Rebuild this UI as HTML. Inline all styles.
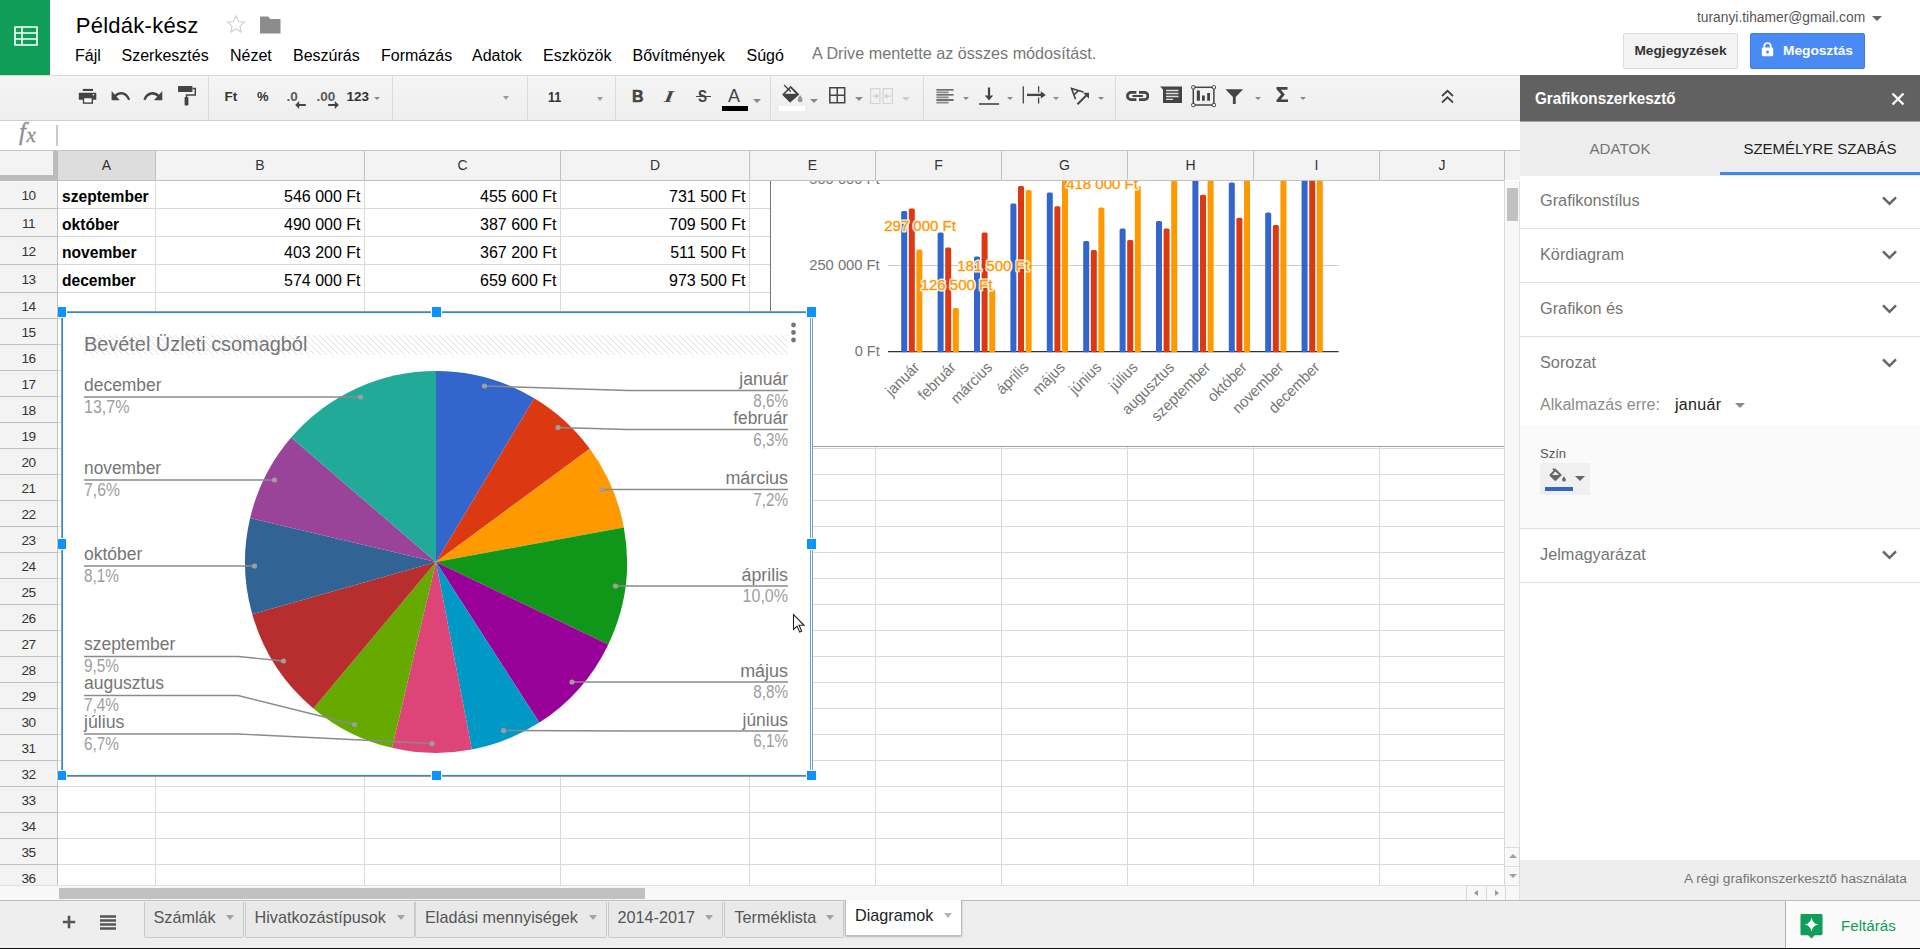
<!DOCTYPE html>
<html><head><meta charset="utf-8">
<style>
*{box-sizing:border-box;margin:0;padding:0}
html,body{width:1920px;height:949px;overflow:hidden;background:#fff;font-family:"Liberation Sans",sans-serif;}
div,span,svg{position:absolute}
.t{white-space:nowrap}
#top{left:0;top:0;width:1920px;height:75px;background:#fff}
#logo{left:0;top:0;width:50px;height:75px;background:#0f9d58}
#title{left:75.7px;top:12.7px;font-size:22px;line-height:26px;color:#000;letter-spacing:0.27px}
.menu{top:46px;font-size:16px;line-height:20px;color:#000}
#saved{left:812px;top:43px;font-size:16.2px;line-height:20px;color:#777}
#email{left:1697px;top:9px;font-size:13.8px;line-height:18px;color:#555}
.btn{top:33px;height:36px;border-radius:2px;font-weight:bold;font-size:13.7px;line-height:33px}
#toolbar{left:0;top:75px;width:1520px;height:46px;background:linear-gradient(#f5f5f5,#eeeeee);border-top:1px solid #d9d9d9;border-bottom:1px solid #d0d0d0}
.sep{top:76px;width:1px;height:44px;background:#dadada}
.tb{font-weight:bold;color:#333;font-size:13px;line-height:16px}
.dd{width:0;height:0;border-left:4px solid transparent;border-right:4px solid transparent;border-top:4px solid #777}
#fbar{left:0;top:121px;width:1520px;height:30px;background:#fff}
#grid{left:0;top:150px;width:1520px;height:750px;background:#fff;overflow:hidden}
.ch{top:1px;height:29px;background:#f3f3f3;border-right:1px solid #c0c0c0;color:#333;font-size:14px;line-height:28px;text-align:center}
.rh{left:0;width:57px;background:#f3f3f3;border-bottom:1px solid #c0c0c0;color:#333;font-size:13.6px;letter-spacing:-0.6px;text-align:center}
.vl{width:1px;background:#d9d9d9;top:30px;height:705px}
.hl{height:1px;background:#d9d9d9;left:58px;width:1446px}
.cell{font-size:15.6px;line-height:28px;height:28px;color:#000}
.cb{font-weight:bold;left:62px}
.cn{text-align:right;font-size:16px}
#panel{left:1520px;top:75px;width:400px;height:825px;background:#fff}
.sec{left:20px;font-size:16.3px;line-height:20px;color:#757575}
.sl{left:0;width:400px;height:1px;background:#e0e0e0}
#bottom{left:0;top:900px;width:1920px;height:48px;background:#eeeeee;border-top:1px solid #bdbdbd}
.tab{top:1px;height:36px;background:#e9e9e9;border:1px solid #c9c9c9;border-top:none;border-radius:0 0 2px 2px;font-size:16.2px;line-height:31px;color:#555}
.tab .dd{top:12.5px;border-top-color:#a3a3a3;border-left-width:4.75px;border-right-width:4.75px;border-top-width:5px}
</style></head><body>
<div id="top">
<div id="logo"><svg style="left:13.5px;top:26px" width="24" height="20" viewBox="0 0 24 20"><path d="M1 1h22v18H1zM1 7h22M1 13h22M8 1v18" fill="none" stroke="#fff" stroke-width="1.6"/></svg></div>
<div id="title" class="t">Példák-kész</div>
<svg style="left:225px;top:13px" width="22" height="22" viewBox="0 0 24 24"><path d="M12 3.2l2.7 6.1 6.6.6-5 4.4 1.5 6.5L12 17.4l-5.8 3.4 1.5-6.5-5-4.4 6.6-.6z" fill="none" stroke="#cfcfcf" stroke-width="1.2" stroke-linejoin="miter"/></svg>
<svg style="left:260px;top:16px" width="21" height="18" viewBox="0 0 21 18"><path d="M0 1.5Q0 0.5 1 0.5H8L10.5 3H20Q20.5 3 20.5 4V17.5H0z" fill="#8c8c8c"/></svg>
<div class="menu t" style="left:75px">Fájl</div>
<div class="menu t" style="left:121.5px">Szerkesztés</div>
<div class="menu t" style="left:230px">Nézet</div>
<div class="menu t" style="left:293px">Beszúrás</div>
<div class="menu t" style="left:381px">Formázás</div>
<div class="menu t" style="left:472px">Adatok</div>
<div class="menu t" style="left:543px">Eszközök</div>
<div class="menu t" style="left:632.5px">Bővítmények</div>
<div class="menu t" style="left:746.5px">Súgó</div>
<div id="saved" class="t">A Drive mentette az összes módosítást.</div>
<div id="email" class="t">turanyi.tihamer@gmail.com</div>
<div class="dd" style="left:1872px;top:16px;border-left-width:5px;border-right-width:5px;border-top-width:5px;border-top-color:#666"></div>
<div class="btn t" style="left:1623px;width:115px;background:#f3f3f3;border:1px solid #dcdcdc;color:#333;text-align:center">Megjegyzések</div>
<div class="btn t" style="left:1750px;width:115px;background:#4a8af4;border:1px solid #3f7de8;color:#fff;"><span class="t" style="left:32px;top:0">Megosztás</span><svg style="left:10px;top:7.5px" width="13" height="15" viewBox="0 0 13 15"><path d="M3.3 6V4.2a3.2 3.2 0 0 1 6.4 0V6" fill="none" stroke="#fff" stroke-width="1.7"/><rect x="0.8" y="5.6" width="11.4" height="8.6" rx="1.2" fill="#fff"/><circle cx="6.5" cy="9.9" r="1.5" fill="#4a8af4"/></svg></div>
</div>
<div id="toolbar"></div>
<div class="sep" style="left:208px"></div>
<div class="sep" style="left:392px"></div>
<div class="sep" style="left:527px"></div>
<div class="sep" style="left:615px"></div>
<div class="sep" style="left:770px"></div>
<div class="sep" style="left:923px"></div>
<div class="sep" style="left:1115px"></div>
<svg style="left:78px;top:88px" width="19" height="17" viewBox="0 0 19 17"><rect x="4.8" y="0.9" width="10.2" height="2.1" fill="#444"/><rect x="0.8" y="4.8" width="17.5" height="7" rx="0.6" fill="#444"/><rect x="5.5" y="9.6" width="8.8" height="5.5" fill="#fff" stroke="#444" stroke-width="1.4"/><circle cx="15.4" cy="6.7" r="0.8" fill="#fff"/></svg>
<svg style="left:109px;top:84px" width="24" height="20" viewBox="0 0 24 20"><path transform="translate(2.6 7) scale(0.906 1.03) translate(-2 -7)" d="M12.5 8c-2.65 0-5.05.99-6.9 2.6L2 7v9h9l-3.620-3.620c1.390-1.160 3.160-1.880 5.120-1.880 3.540 0 6.550 2.310 7.600 5.500l2.370-.780C21.080 11.030 17.150 8 12.500 8z" fill="#444"/></svg>
<svg style="left:141px;top:84px" width="24" height="20" viewBox="0 0 24 20"><path transform="translate(2.4 7) scale(0.924 1.04) translate(-1.54 -7)" d="M18.400 10.600C16.550 8.990 14.150 8 11.500 8c-4.650 0-8.580 3.030-9.960 7.220L3.900 16c1.050-3.190 4.050-5.500 7.600-5.500 1.950 0 3.730.720 5.120 1.880L13 16h9V7l-3.600 3.600z" fill="#444"/></svg>
<svg style="left:177px;top:85px" width="20" height="22" viewBox="0 0 20 22"><rect x="1" y="1" width="14.5" height="6" rx="0.8" fill="#444"/><path d="M15.5 3.5h2.8v6.5H9.5v3" fill="none" stroke="#444" stroke-width="1.5"/><rect x="7.6" y="12" width="3.8" height="8.5" rx="0.8" fill="#444"/></svg>
<div class="tb t" style="left:224.5px;top:88.7px;font-size:13.5px">Ft</div>
<div class="tb t" style="left:257px;top:88.7px;font-size:13px">%</div>
<div class="tb t" style="left:286.5px;top:89px;font-size:13.5px;color:#5a5a5a">.0</div>
<svg style="left:294.5px;top:101px" width="11" height="8" viewBox="0 0 11 8"><path d="M4.2 0L0.2 4 4.2 8z" fill="#444"/><path d="M3 3h7.8v2H3z" fill="#444"/></svg>
<div class="tb t" style="left:316.5px;top:89px;font-size:13.5px;color:#5a5a5a">.00</div>
<svg style="left:328px;top:101px" width="11" height="8" viewBox="0 0 11 8"><path d="M6.8 0L10.8 4 6.8 8z" fill="#444"/><path d="M8 3H0.2v2H8z" fill="#444"/></svg>
<div class="tb t" style="left:346.5px;top:88.7px;font-size:13.5px">123</div>
<div class="dd" style="left:373.5px;top:97px;border-left-width:3.5px;border-right-width:3.5px;border-top-width:3.5px;border-top-color:#888"></div>
<div class="dd" style="left:503.3px;top:96px;border-left-width:3.3px;border-right-width:3.3px;border-top-width:4px;border-top-color:#999"></div>
<div class="tb t" style="left:546.5px;top:89px;font-size:14.6px;font-weight:bold;transform:scaleX(0.86)">11</div>
<div class="dd" style="left:597.3px;top:97px;border-left-width:3.3px;border-right-width:3.3px;border-top-width:4px;border-top-color:#999"></div>
<div class="tb t" style="left:632px;top:86.5px;font-size:16px;line-height:20px;font-weight:bold;color:#444;-webkit-text-stroke:0.5px #444">B</div>
<div class="tb t" style="left:666px;top:86.5px;font-size:16.5px;line-height:20px;font-weight:bold;font-family:'Liberation Serif',serif;color:#444;transform:skewX(-22deg) scaleX(1.35);transform-origin:50% 50%">I</div>
<div class="tb t" style="left:697px;top:86px;font-size:16.5px;line-height:20px;font-weight:bold;color:#444;transform:scaleX(0.82)">S</div><div style="left:695.5px;top:95.5px;width:15px;height:1.5px;background:#444"></div>
<div class="tb t" style="left:728px;top:85px;font-size:18px;line-height:22px;font-weight:normal;color:#444">A</div><div style="left:722px;top:106px;width:26px;height:5px;background:#000"></div>
<div class="dd" style="left:753px;top:99px;border-left-width:4px;border-right-width:4px;border-top-width:4px;border-top-color:#888"></div>
<svg style="left:779px;top:84px" width="26" height="20" viewBox="0 0 26 20"><path d="M3.900 10.700L11.700 2.600 19.600 10.400 11.100 17.900z" fill="#444" stroke="#444" stroke-width="1.200" stroke-linejoin="round"/><path d="M6.000 9.800L11.600 4.300 16.800 9.800z" fill="#f7f7f7"/><path d="M5.100 1L11.800 7.800" stroke="#444" stroke-width="1.400" fill="none"/><path d="M21.100 11q2.500 3.300 2.500 4.800a2.500 2.500 0 0 1-5 0q0-1.500 2.500-4.800z" fill="#9a9a9a"/></svg>
<div style="left:779px;top:106px;width:26px;height:5px;background:#fff"></div>
<div class="dd" style="left:810px;top:99px;border-left-width:4px;border-right-width:4px;border-top-width:4px;border-top-color:#888"></div>
<svg style="left:829px;top:87.3px" width="16.5" height="16.5" viewBox="0 0 16.5 16.5"><path d="M0.8 0.8h14.900v14.900H0.800zM8.250 0.800v14.900M0.800 8.250h14.900" fill="none" stroke="#444" stroke-width="1.500"/></svg>
<div class="dd" style="left:855px;top:97px;border-left-width:4px;border-right-width:4px;border-top-width:4px;border-top-color:#888"></div>
<svg style="left:870px;top:87.6px" width="23" height="16.2" viewBox="0 0 23 16.2"><path d="M0.600 0.600h9.300v15H0.600zM13.100 0.600h9.300v15h-9.300z" fill="none" stroke="#d4d4d4" stroke-width="1.200"/><path d="M2.800 8.100h4M17 8.100h4" fill="none" stroke="#d0d0d0" stroke-width="1.300"/><path d="M5.800 5.300L9 8.100 5.800 10.900zM17.200 5.300L14 8.100l3.200 2.800z" fill="#d0d0d0"/></svg>
<div class="dd" style="left:902px;top:97px;border-left-width:4px;border-right-width:4px;border-top-width:4px;border-top-color:#ccc"></div>
<svg style="left:935.5px;top:88.5px" width="18" height="15" viewBox="0 0 18 15"><path d="M0.400 0.900h17.200M0.400 5.900h17.200M0.400 11h17.200" stroke="#444" stroke-width="1.300"/><path d="M0.400 3.400h12.200M0.400 8.400h12.200M0.400 13.600h12.200" stroke="#8a8a8a" stroke-width="1.700"/></svg>
<div class="dd" style="left:962.5px;top:97px;border-left-width:3.5px;border-right-width:3.5px;border-top-width:3.5px;border-top-color:#888"></div>
<svg style="left:979px;top:87px" width="20" height="18" viewBox="0 0 20 18"><path d="M10 0.500v10" stroke="#444" stroke-width="2.200"/><path d="M5.800 8.500h8.400L10 13.500z" fill="#444"/><path d="M0 17h20" stroke="#444" stroke-width="1.600"/></svg>
<div class="dd" style="left:1007px;top:97px;border-left-width:3.5px;border-right-width:3.5px;border-top-width:3.5px;border-top-color:#888"></div>
<svg style="left:1022px;top:86px" width="24" height="20" viewBox="0 0 24 20"><path d="M1.300 0.200v17.400" stroke="#444" stroke-width="1.300"/><path d="M16.600 0.200v6.300M16.600 11.400v6.200" stroke="#444" stroke-width="1.300"/><path d="M5 8.900h15" stroke="#444" stroke-width="2.300"/><path d="M18.800 5.300L23.800 8.900l-5 3.600z" fill="#444"/></svg>
<div class="dd" style="left:1053px;top:97px;border-left-width:3.5px;border-right-width:3.5px;border-top-width:3.5px;border-top-color:#888"></div>
<svg style="left:1069px;top:86px" width="22" height="20" viewBox="0 0 22 20"><path d="M6.500 13.300L2.500 2.400 14.400 5.900M4.900 8.900L9.600 4.500" fill="none" stroke="#444" stroke-width="1.600" stroke-linejoin="miter"/><path d="M8.500 18.300L18.500 8.300" stroke="#444" stroke-width="2"/><path d="M14 6.700h6v6z" fill="#444"/></svg>
<div class="dd" style="left:1098px;top:97px;border-left-width:3.5px;border-right-width:3.5px;border-top-width:3.5px;border-top-color:#888"></div>
<svg style="left:1126px;top:91.1px" width="23.4" height="10" viewBox="0 0 23.4 10"><path d="M10.400 1.400H5a3.600 3.600 0 0 0 0 7.200H10.400M13 1.400h5.400a3.600 3.600 0 0 1 0 7.200H13" fill="none" stroke="#444" stroke-width="2.700"/><path d="M6.500 5h10.400" stroke="#444" stroke-width="2"/></svg>
<svg style="left:1160px;top:86px" width="22" height="20" viewBox="0 0 22 20"><path d="M0 0.5h22v16.5h-19v-13.500z" fill="#444"/><path d="M6 4.5h12.500M6 7.500h12.500M6 10.500h12.500M6 13.300h7" stroke="#ddd" stroke-width="1.3"/></svg>
<svg style="left:1191px;top:85px" width="25" height="23" viewBox="0 0 25 23"><rect x="2.300" y="2.300" width="20.600" height="17.700" fill="none" stroke="#444" stroke-width="1.500"/><path d="M5.800 5.400h3.100v10.400H5.800zM11 10.600h2.800v5.200H11zM16.200 8h2.800v7.800h-2.800z" fill="#444"/><g fill="#f4f4f4" stroke="#444" stroke-width="1"><rect x="0.700" y="0.700" width="3.200" height="3.200" rx="0.800"/><rect x="21.300" y="0.700" width="3.200" height="3.200" rx="0.800"/><rect x="0.700" y="18.400" width="3.200" height="3.200" rx="0.800"/><rect x="21.300" y="18.400" width="3.200" height="3.200" rx="0.800"/></g></svg>
<svg style="left:1225px;top:89px" width="19" height="16" viewBox="0 0 19 16"><path d="M0.400 0.300h17.700L10.700 8v7H7.900V8z" fill="#444"/></svg>
<div class="dd" style="left:1255px;top:97px;border-left-width:3.5px;border-right-width:3.5px;border-top-width:3.5px;border-top-color:#888"></div>
<svg style="left:1276px;top:87.2px" width="12.5" height="15.3" viewBox="0 0 12.5 15.3"><path d="M0.500 0h11v2.700H4.800L8.800 7.600 4.800 12.600H12v2.700H0.500v-2.200L5.200 7.600 0.500 2.200z" fill="#444"/></svg>
<div class="dd" style="left:1300px;top:97px;border-left-width:3.5px;border-right-width:3.5px;border-top-width:3.5px;border-top-color:#888"></div>
<svg style="left:1440px;top:89px" width="15" height="15" viewBox="0 0 15 15"><path d="M2 7L7.5 1.8 13 7M2 13.5L7.5 8.3 13 13.5" fill="none" stroke="#444" stroke-width="1.8"/></svg>
<div id="fbar"><div class="t" style="left:19px;top:-3px;font-family:'Liberation Serif',serif;font-style:italic;font-weight:normal;font-size:25px;line-height:28px;color:#8e8e8e;-webkit-text-stroke:0.3px #8e8e8e">f<span style="position:relative;font-size:21px;left:0.5px;top:1.5px">x</span></div><div style="left:56px;top:4px;width:2px;height:21px;background:#cbcbcb"></div></div>
<div id="grid">
<div style="left:0;top:0;width:1520px;height:1px;background:#c6c6c6"></div>
<div class="ch" style="left:58px;width:98px;background:#dddddd">A</div>
<div class="ch" style="left:156px;width:209px;background:#f3f3f3">B</div>
<div class="ch" style="left:365px;width:196px;background:#f3f3f3">C</div>
<div class="ch" style="left:561px;width:189px;background:#f3f3f3">D</div>
<div class="ch" style="left:750px;width:126px;background:#f3f3f3">E</div>
<div class="ch" style="left:876px;width:126px;background:#f3f3f3">F</div>
<div class="ch" style="left:1002px;width:126px;background:#f3f3f3">G</div>
<div class="ch" style="left:1128px;width:126px;background:#f3f3f3">H</div>
<div class="ch" style="left:1254px;width:126px;background:#f3f3f3">I</div>
<div class="ch" style="left:1380px;width:125px;background:#f3f3f3">J</div>
<div style="left:0;top:30px;width:1505px;height:1px;background:#c0c0c0"></div>
<div style="left:0;top:1px;width:57px;height:29px;background:#f3f3f3"></div>
<div style="left:53px;top:1px;width:5px;height:29px;background:#bcbcbc"></div>
<div style="left:0;top:25px;width:58px;height:5px;background:#bcbcbc"></div>
<div style="left:1505px;top:1px;width:15px;height:29px;background:#f3f3f3"></div>
<div class="rh" style="top:31px;height:28px;line-height:29px">10</div>
<div class="rh" style="top:59px;height:28px;line-height:29px">11</div>
<div class="rh" style="top:87px;height:28px;line-height:29px">12</div>
<div class="rh" style="top:115px;height:28px;line-height:29px">13</div>
<div class="rh" style="top:143px;height:26px;line-height:27px">14</div>
<div class="rh" style="top:169px;height:26px;line-height:27px">15</div>
<div class="rh" style="top:195px;height:26px;line-height:27px">16</div>
<div class="rh" style="top:221px;height:26px;line-height:27px">17</div>
<div class="rh" style="top:247px;height:26px;line-height:27px">18</div>
<div class="rh" style="top:273px;height:26px;line-height:27px">19</div>
<div class="rh" style="top:299px;height:26px;line-height:27px">20</div>
<div class="rh" style="top:325px;height:26px;line-height:27px">21</div>
<div class="rh" style="top:351px;height:26px;line-height:27px">22</div>
<div class="rh" style="top:377px;height:26px;line-height:27px">23</div>
<div class="rh" style="top:403px;height:26px;line-height:27px">24</div>
<div class="rh" style="top:429px;height:26px;line-height:27px">25</div>
<div class="rh" style="top:455px;height:26px;line-height:27px">26</div>
<div class="rh" style="top:481px;height:26px;line-height:27px">27</div>
<div class="rh" style="top:507px;height:26px;line-height:27px">28</div>
<div class="rh" style="top:533px;height:26px;line-height:27px">29</div>
<div class="rh" style="top:559px;height:26px;line-height:27px">30</div>
<div class="rh" style="top:585px;height:26px;line-height:27px">31</div>
<div class="rh" style="top:611px;height:26px;line-height:27px">32</div>
<div class="rh" style="top:637px;height:26px;line-height:27px">33</div>
<div class="rh" style="top:663px;height:26px;line-height:27px">34</div>
<div class="rh" style="top:689px;height:26px;line-height:27px">35</div>
<div class="rh" style="top:715px;height:26px;line-height:27px">36</div>
<div style="left:57px;top:31px;width:1px;height:705px;background:#c0c0c0"></div>
<div class="vl" style="left:155px"></div>
<div class="vl" style="left:364px"></div>
<div class="vl" style="left:560px"></div>
<div class="vl" style="left:749px"></div>
<div class="vl" style="left:875px"></div>
<div class="vl" style="left:1001px"></div>
<div class="vl" style="left:1127px"></div>
<div class="vl" style="left:1253px"></div>
<div class="vl" style="left:1379px"></div>
<div class="vl" style="left:1504px"></div>
<div class="hl" style="top:58px"></div>
<div class="hl" style="top:86px"></div>
<div class="hl" style="top:114px"></div>
<div class="hl" style="top:142px"></div>
<div class="hl" style="top:168px"></div>
<div class="hl" style="top:194px"></div>
<div class="hl" style="top:220px"></div>
<div class="hl" style="top:246px"></div>
<div class="hl" style="top:272px"></div>
<div class="hl" style="top:298px"></div>
<div class="hl" style="top:324px"></div>
<div class="hl" style="top:350px"></div>
<div class="hl" style="top:376px"></div>
<div class="hl" style="top:402px"></div>
<div class="hl" style="top:428px"></div>
<div class="hl" style="top:454px"></div>
<div class="hl" style="top:480px"></div>
<div class="hl" style="top:506px"></div>
<div class="hl" style="top:532px"></div>
<div class="hl" style="top:558px"></div>
<div class="hl" style="top:584px"></div>
<div class="hl" style="top:610px"></div>
<div class="hl" style="top:636px"></div>
<div class="hl" style="top:662px"></div>
<div class="hl" style="top:688px"></div>
<div class="hl" style="top:714px"></div>
<div class="hl" style="top:740px"></div>
<div class="cell cb t" style="top:32.5px">szeptember</div>
<div class="cell cn t" style="top:32.5px;right:1159.5px">546 000 Ft</div>
<div class="cell cn t" style="top:32.5px;right:963.5px">455 600 Ft</div>
<div class="cell cn t" style="top:32.5px;right:774.5px">731 500 Ft</div>
<div class="cell cb t" style="top:60.5px">október</div>
<div class="cell cn t" style="top:60.5px;right:1159.5px">490 000 Ft</div>
<div class="cell cn t" style="top:60.5px;right:963.5px">387 600 Ft</div>
<div class="cell cn t" style="top:60.5px;right:774.5px">709 500 Ft</div>
<div class="cell cb t" style="top:88.5px">november</div>
<div class="cell cn t" style="top:88.5px;right:1159.5px">403 200 Ft</div>
<div class="cell cn t" style="top:88.5px;right:963.5px">367 200 Ft</div>
<div class="cell cn t" style="top:88.5px;right:774.5px">511 500 Ft</div>
<div class="cell cb t" style="top:116.5px">december</div>
<div class="cell cn t" style="top:116.5px;right:1159.5px">574 000 Ft</div>
<div class="cell cn t" style="top:116.5px;right:963.5px">659 600 Ft</div>
<div class="cell cn t" style="top:116.5px;right:774.5px">973 500 Ft</div>
<div id="bar" style="left:770px;top:31px;width:734px;height:266px;background:#fff;overflow:hidden;border-left:1px solid #777;border-bottom:1px solid #9e9e9e">
<svg style="left:0;top:0" width="734" height="266" font-family="Liberation Sans, sans-serif"><path d="M117 84.5H567.5" stroke="#ccc" stroke-width="1"/><path d="M117 170.6H567.5" stroke="#333" stroke-width="1.300"/><rect x="130.2" y="30.0" width="6" height="141.3" rx="1.5" fill="#3366cc"/><rect x="137.8" y="27.6" width="6" height="143.7" rx="1.5" fill="#dc3912"/><rect x="145.4" y="68.4" width="6" height="102.9" rx="1.5" fill="#ff9900"/><rect x="166.6" y="51.4" width="6" height="119.9" rx="1.5" fill="#3366cc"/><rect x="174.2" y="66.4" width="6" height="104.9" rx="1.5" fill="#dc3912"/><rect x="181.8" y="126.9" width="6" height="44.4" rx="1.5" fill="#ff9900"/><rect x="203.0" y="75.4" width="6" height="95.9" rx="1.5" fill="#3366cc"/><rect x="210.6" y="51.4" width="6" height="119.9" rx="1.5" fill="#dc3912"/><rect x="218.2" y="108.2" width="6" height="63.1" rx="1.5" fill="#ff9900"/><rect x="239.4" y="22.6" width="6" height="148.7" rx="1.5" fill="#3366cc"/><rect x="247.0" y="5.0" width="6" height="166.3" rx="1.5" fill="#dc3912"/><rect x="254.6" y="9.0" width="6" height="162.3" rx="1.5" fill="#ff9900"/><rect x="275.8" y="11.4" width="6" height="159.9" rx="1.5" fill="#3366cc"/><rect x="283.4" y="25.2" width="6" height="146.1" rx="1.5" fill="#dc3912"/><rect x="291.0" y="-79.6" width="6" height="250.9" rx="1.5" fill="#ff9900"/><rect x="312.2" y="60.0" width="6" height="111.3" rx="1.5" fill="#3366cc"/><rect x="319.8" y="69.0" width="6" height="102.3" rx="1.5" fill="#dc3912"/><rect x="327.4" y="26.6" width="6" height="144.7" rx="1.5" fill="#ff9900"/><rect x="348.6" y="47.4" width="6" height="123.9" rx="1.5" fill="#3366cc"/><rect x="356.2" y="59.0" width="6" height="112.3" rx="1.5" fill="#dc3912"/><rect x="363.8" y="5.0" width="6" height="166.3" rx="1.5" fill="#ff9900"/><rect x="385.0" y="40.0" width="6" height="131.3" rx="1.5" fill="#3366cc"/><rect x="392.6" y="47.6" width="6" height="123.7" rx="1.5" fill="#dc3912"/><rect x="400.2" y="-59.6" width="6" height="230.9" rx="1.5" fill="#ff9900"/><rect x="421.4" y="-17.4" width="6" height="188.7" rx="1.5" fill="#3366cc"/><rect x="429.0" y="13.8" width="6" height="157.5" rx="1.5" fill="#dc3912"/><rect x="436.6" y="-81.6" width="6" height="252.9" rx="1.5" fill="#ff9900"/><rect x="457.8" y="1.6" width="6" height="169.7" rx="1.5" fill="#3366cc"/><rect x="465.4" y="36.8" width="6" height="134.5" rx="1.5" fill="#dc3912"/><rect x="473.0" y="-73.6" width="6" height="244.9" rx="1.5" fill="#ff9900"/><rect x="494.2" y="31.5" width="6" height="139.8" rx="1.5" fill="#3366cc"/><rect x="501.8" y="44.1" width="6" height="127.2" rx="1.5" fill="#dc3912"/><rect x="509.4" y="-25.6" width="6" height="196.9" rx="1.5" fill="#ff9900"/><rect x="530.6" y="-27.1" width="6" height="198.4" rx="1.5" fill="#3366cc"/><rect x="538.2" y="-56.6" width="6" height="227.9" rx="1.5" fill="#dc3912"/><rect x="545.8" y="-164.6" width="6" height="335.9" rx="1.5" fill="#ff9900"/><text x="108.70000000000005" y="89.39999999999998" text-anchor="end" font-size="15.5" textLength="70.5" lengthAdjust="spacingAndGlyphs" fill="#757575">250 000 Ft</text><text x="108.70000000000005" y="175" text-anchor="end" font-size="15.5" textLength="25" lengthAdjust="spacingAndGlyphs" fill="#757575">0 Ft</text><text x="108.70000000000005" y="3.3000000000000114" text-anchor="end" font-size="15.5" textLength="70.5" lengthAdjust="spacingAndGlyphs" fill="#757575">500 000 Ft</text><text x="149" y="50.3" text-anchor="middle" font-size="15" fill="#fff" stroke="#fff" stroke-width="3.2" stroke-linejoin="round" opacity="0.92">297 000 Ft</text><text x="149" y="50.3" text-anchor="middle" font-size="15" fill="#ff9900" stroke="#ff9900" stroke-width="0.35">297 000 Ft</text><text x="185.5" y="109.3" text-anchor="middle" font-size="15" fill="#fff" stroke="#fff" stroke-width="3.2" stroke-linejoin="round" opacity="0.92">126 500 Ft</text><text x="185.5" y="109.3" text-anchor="middle" font-size="15" fill="#ff9900" stroke="#ff9900" stroke-width="0.35">126 500 Ft</text><text x="222" y="90.3" text-anchor="middle" font-size="15" fill="#fff" stroke="#fff" stroke-width="3.2" stroke-linejoin="round" opacity="0.92">181 500 Ft</text><text x="222" y="90.3" text-anchor="middle" font-size="15" fill="#ff9900" stroke="#ff9900" stroke-width="0.35">181 500 Ft</text><text x="331" y="8.3" text-anchor="middle" font-size="15" fill="#fff" stroke="#fff" stroke-width="3.2" stroke-linejoin="round" opacity="0.92">418 000 Ft</text><text x="331" y="8.3" text-anchor="middle" font-size="15" fill="#ff9900" stroke="#ff9900" stroke-width="0.35">418 000 Ft</text><text transform="translate(142.0 180) rotate(-45) scale(0.95 1)" text-anchor="end" font-size="15.4" fill="#757575" dy="10.4">január</text><text transform="translate(178.4 180) rotate(-45) scale(0.95 1)" text-anchor="end" font-size="15.4" fill="#757575" dy="10.4">február</text><text transform="translate(214.8 180) rotate(-45) scale(0.95 1)" text-anchor="end" font-size="15.4" fill="#757575" dy="10.4">március</text><text transform="translate(251.2 180) rotate(-45) scale(0.95 1)" text-anchor="end" font-size="15.4" fill="#757575" dy="10.4">április</text><text transform="translate(287.6 180) rotate(-45) scale(0.95 1)" text-anchor="end" font-size="15.4" fill="#757575" dy="10.4">május</text><text transform="translate(324.0 180) rotate(-45) scale(0.95 1)" text-anchor="end" font-size="15.4" fill="#757575" dy="10.4">június</text><text transform="translate(360.4 180) rotate(-45) scale(0.95 1)" text-anchor="end" font-size="15.4" fill="#757575" dy="10.4">július</text><text transform="translate(396.8 180) rotate(-45) scale(0.95 1)" text-anchor="end" font-size="15.4" fill="#757575" dy="10.4">augusztus</text><text transform="translate(433.2 180) rotate(-45) scale(0.95 1)" text-anchor="end" font-size="15.4" fill="#757575" dy="10.4">szeptember</text><text transform="translate(469.6 180) rotate(-45) scale(0.95 1)" text-anchor="end" font-size="15.4" fill="#757575" dy="10.4">október</text><text transform="translate(506.0 180) rotate(-45) scale(0.95 1)" text-anchor="end" font-size="15.4" fill="#757575" dy="10.4">november</text><text transform="translate(542.4 180) rotate(-45) scale(0.95 1)" text-anchor="end" font-size="15.4" fill="#757575" dy="10.4">december</text></svg>
</div>
<div id="pie" style="left:61px;top:161px;width:752px;height:466px;background:#fff;border:1px solid #9a9a9a"><div style="left:0;top:0;width:749px;height:464px;border:1px solid #1a90f5;border-right:none"></div><div style="left:748px;top:0;width:1px;height:464px;background:#4aa8ff"></div><div style="left:749px;top:0;width:1px;height:464px;background:#fff"></div>
<svg style="left:0;top:0" width="750" height="464" font-family="Liberation Sans, sans-serif"><defs><pattern id="h" width="6" height="6" patternUnits="userSpaceOnUse"><path d="M-1 -1L7 7M-1 5L1 7M5 -1L7 1" stroke="#dcdcdc" stroke-width="0.9"/></pattern></defs><rect x="22" y="23" width="704" height="20" fill="url(#h)"/><text x="22" y="39" font-size="19.9" fill="#757575">Bevétel Üzleti csomagból</text><circle cx="731.5" cy="13" r="2.4" fill="#757575"/><circle cx="731.5" cy="20.5" r="2.4" fill="#757575"/><circle cx="731.5" cy="28" r="2.4" fill="#757575"/><path d="M374 250L374.00 59.00A191 191 0 0 1 472.26 86.21Z" fill="#3366cc"/><path d="M374 250L472.26 86.21A191 191 0 0 1 527.81 136.76Z" fill="#dc3912"/><path d="M374 250L527.81 136.76A191 191 0 0 1 561.84 215.39Z" fill="#ff9900"/><path d="M374 250L561.84 215.39A191 191 0 0 1 546.31 332.41Z" fill="#109618"/><path d="M374 250L546.31 332.41A191 191 0 0 1 477.35 410.62Z" fill="#990099"/><path d="M374 250L477.35 410.62A191 191 0 0 1 409.79 437.62Z" fill="#0099c6"/><path d="M374 250L409.79 437.62A191 191 0 0 1 330.00 435.86Z" fill="#dd4477"/><path d="M374 250L330.00 435.86A191 191 0 0 1 251.33 396.40Z" fill="#66aa00"/><path d="M374 250L251.33 396.40A191 191 0 0 1 190.25 302.13Z" fill="#b82e2e"/><path d="M374 250L190.25 302.13A191 191 0 0 1 188.14 206.00Z" fill="#316395"/><path d="M374 250L188.14 206.00A191 191 0 0 1 229.15 125.50Z" fill="#994499"/><path d="M374 250L229.15 125.50A191 191 0 0 1 374.00 59.00Z" fill="#22aa99"/><path d="M726 78.5L566 78.5L422.5 74" fill="none" stroke="#8a8a8a" stroke-width="1.4"/><circle cx="422.5" cy="74" r="2.6" fill="#9e9e9e"/><text x="677.3" y="73.0" textLength="48.7" lengthAdjust="spacingAndGlyphs" font-size="19.2" fill="#757575">január</text><text x="691.2" y="94.5" textLength="34.8" lengthAdjust="spacingAndGlyphs" font-size="18" fill="#9e9e9e">8,6%</text><path d="M726 117.5L566 117.5L496 115.5" fill="none" stroke="#8a8a8a" stroke-width="1.4"/><circle cx="496" cy="115.5" r="2.6" fill="#9e9e9e"/><text x="671.3" y="112.0" textLength="54.7" lengthAdjust="spacingAndGlyphs" font-size="19.2" fill="#757575">február</text><text x="691.2" y="133.5" textLength="34.8" lengthAdjust="spacingAndGlyphs" font-size="18" fill="#9e9e9e">6,3%</text><path d="M726 177.5L540.5 177.5" fill="none" stroke="#8a8a8a" stroke-width="1.4"/><circle cx="540.5" cy="177.5" r="2.6" fill="#9e9e9e"/><text x="663.4" y="172.0" textLength="62.6" lengthAdjust="spacingAndGlyphs" font-size="19.2" fill="#757575">március</text><text x="691.2" y="193.5" textLength="34.8" lengthAdjust="spacingAndGlyphs" font-size="18" fill="#9e9e9e">7,2%</text><path d="M726 274L553.5 274" fill="none" stroke="#8a8a8a" stroke-width="1.4"/><circle cx="553.5" cy="274" r="2.6" fill="#9e9e9e"/><text x="679.6" y="268.5" textLength="46.4" lengthAdjust="spacingAndGlyphs" font-size="19.2" fill="#757575">április</text><text x="680.6" y="290" textLength="45.4" lengthAdjust="spacingAndGlyphs" font-size="18" fill="#9e9e9e">10,0%</text><path d="M726 370L510 370" fill="none" stroke="#8a8a8a" stroke-width="1.4"/><circle cx="510" cy="370" r="2.6" fill="#9e9e9e"/><text x="678.2" y="364.5" textLength="47.8" lengthAdjust="spacingAndGlyphs" font-size="19.2" fill="#757575">május</text><text x="691.2" y="386" textLength="34.8" lengthAdjust="spacingAndGlyphs" font-size="18" fill="#9e9e9e">8,8%</text><path d="M726 419L566 419L441.5 418.5" fill="none" stroke="#8a8a8a" stroke-width="1.4"/><circle cx="441.5" cy="418.5" r="2.6" fill="#9e9e9e"/><text x="680.6" y="413.5" textLength="45.4" lengthAdjust="spacingAndGlyphs" font-size="19.2" fill="#757575">június</text><text x="691.2" y="435" textLength="34.8" lengthAdjust="spacingAndGlyphs" font-size="18" fill="#9e9e9e">6,1%</text><path d="M22 85L298.5 85" fill="none" stroke="#8a8a8a" stroke-width="1.4"/><circle cx="298.5" cy="85" r="2.6" fill="#9e9e9e"/><text x="22" y="78.5" textLength="77.6" lengthAdjust="spacingAndGlyphs" font-size="19.2" fill="#757575">december</text><text x="22" y="100.60000000000002" textLength="45.5" lengthAdjust="spacingAndGlyphs" font-size="18" fill="#9e9e9e">13,7%</text><path d="M22 168L212.5 168" fill="none" stroke="#8a8a8a" stroke-width="1.4"/><circle cx="212.5" cy="168" r="2.6" fill="#9e9e9e"/><text x="22" y="161.5" textLength="77.1" lengthAdjust="spacingAndGlyphs" font-size="19.2" fill="#757575">november</text><text x="22" y="183.60000000000002" textLength="35.9" lengthAdjust="spacingAndGlyphs" font-size="18" fill="#9e9e9e">7,6%</text><path d="M22 254L192.5 254" fill="none" stroke="#8a8a8a" stroke-width="1.4"/><circle cx="192.5" cy="254" r="2.6" fill="#9e9e9e"/><text x="22" y="247.5" textLength="58.4" lengthAdjust="spacingAndGlyphs" font-size="19.2" fill="#757575">október</text><text x="22" y="269.6" textLength="35" lengthAdjust="spacingAndGlyphs" font-size="18" fill="#9e9e9e">8,1%</text><path d="M22 344.5L176 344.5L221.5 349" fill="none" stroke="#8a8a8a" stroke-width="1.4"/><circle cx="221.5" cy="349" r="2.6" fill="#9e9e9e"/><text x="22" y="338.0" textLength="91.2" lengthAdjust="spacingAndGlyphs" font-size="19.2" fill="#757575">szeptember</text><text x="22" y="360.1" textLength="35" lengthAdjust="spacingAndGlyphs" font-size="18" fill="#9e9e9e">9,5%</text><path d="M22 383.5L176 383.5L292.5 412.5" fill="none" stroke="#8a8a8a" stroke-width="1.4"/><circle cx="292.5" cy="412.5" r="2.6" fill="#9e9e9e"/><text x="22" y="377.0" textLength="80" lengthAdjust="spacingAndGlyphs" font-size="19.2" fill="#757575">augusztus</text><text x="22" y="399.1" textLength="35" lengthAdjust="spacingAndGlyphs" font-size="18" fill="#9e9e9e">7,4%</text><path d="M22 422L176 422L370 431.5" fill="none" stroke="#8a8a8a" stroke-width="1.4"/><circle cx="370" cy="431.5" r="2.6" fill="#9e9e9e"/><text x="22" y="415.5" textLength="40.5" lengthAdjust="spacingAndGlyphs" font-size="19.2" fill="#757575">július</text><text x="22" y="437.6" textLength="35" lengthAdjust="spacingAndGlyphs" font-size="18" fill="#9e9e9e">6,7%</text></svg>
</div>
<div style="left:57px;top:157px;width:9px;height:10px;background:#0b93ff;box-shadow:0 0 0 1px #fff"></div>
<div style="left:57px;top:621px;width:9px;height:9px;background:#0b93ff;box-shadow:0 0 0 1px #fff"></div>
<div style="left:432px;top:157px;width:9px;height:10px;background:#0b93ff;box-shadow:0 0 0 1px #fff"></div>
<div style="left:432px;top:621px;width:9px;height:9px;background:#0b93ff;box-shadow:0 0 0 1px #fff"></div>
<div style="left:807px;top:157px;width:9px;height:10px;background:#0b93ff;box-shadow:0 0 0 1px #fff"></div>
<div style="left:807px;top:621px;width:9px;height:9px;background:#0b93ff;box-shadow:0 0 0 1px #fff"></div>
<div style="left:57px;top:389px;width:9px;height:10px;background:#0b93ff;box-shadow:0 0 0 1px #fff"></div>
<div style="left:807px;top:389px;width:9px;height:10px;background:#0b93ff;box-shadow:0 0 0 1px #fff"></div>
<div style="left:57px;top:150px;width:1px;height:500px;background:#c0c0c0"></div>
<svg style="left:792px;top:463px" width="14" height="21" viewBox="0 0 14 21"><path d="M1.5 1.5v15l3.6-3.4 2.6 6 2-0.9-2.6-5.9h5z" fill="#fff" stroke="#222" stroke-width="1.1"/></svg>
<div style="left:1504px;top:31px;width:16px;height:705px;background:#f8f8f8;border-left:1px solid #d9d9d9;border-right:1px solid #e0e0e0"></div>
<div style="left:1507px;top:38px;width:11px;height:33px;background:#c1c1c1"></div>
<div style="left:1504px;top:697px;width:16px;height:20px;background:#f8f8f8;border:1px solid #d9d9d9"></div>
<div style="left:1504px;top:716px;width:16px;height:20px;background:#f8f8f8;border:1px solid #d9d9d9"></div>
<div class="dd" style="left:1508.5px;top:703.5px;border-top:none;border-bottom:4px solid #a0a0a0;border-left-width:4px;border-right-width:4px"></div>
<div class="dd" style="left:1508.5px;top:724px;border-top:4px solid #a0a0a0;border-left-width:4px;border-right-width:4px"></div>
<div style="left:0;top:735px;width:1520px;height:15px;background:#f8f8f8;border-top:1px solid #e0e0e0"></div>
<div style="left:59px;top:738px;width:586px;height:11px;background:#c1c1c1"></div>
<div style="left:1466px;top:735px;width:21px;height:16px;border:1px solid #d9d9d9;background:#f8f8f8"></div>
<div style="left:1486px;top:735px;width:20px;height:16px;border:1px solid #d9d9d9;background:#f8f8f8"></div>
<div style="left:1505px;top:735px;width:15px;height:16px;border-right:1px solid #e0e0e0;border-left:1px solid #d9d9d9;border-top:1px solid #d9d9d9;background:#f8f8f8"></div>
<div class="dd" style="left:1473.500px;top:739.5px;border:none;border-top:3.5px solid transparent;border-bottom:3.5px solid transparent;border-right:4.5px solid #999"></div>
<div class="dd" style="left:1494.500px;top:739.5px;border:none;border-top:3.5px solid transparent;border-bottom:3.5px solid transparent;border-left:4.5px solid #999"></div>
</div>
<div id="panel">
<div style="left:0;top:0;width:400px;height:46px;background:#616161"></div><div style="left:0;top:46px;width:400px;height:1px;background:#a4a4a4"></div>
<div class="t" style="left:15px;top:13px;font-size:16.4px;line-height:20px;font-weight:bold;color:#fff;transform:scaleX(0.93);transform-origin:0 50%">Grafikonszerkesztő</div>
<svg style="left:370.5px;top:17px" width="14" height="14" viewBox="0 0 14 14"><path d="M1.5 1.5l11 11M12.5 1.5l-11 11" stroke="#fff" stroke-width="2.4"/></svg>
<div style="left:0;top:47px;width:400px;height:54px;background:#eeeeee"></div>
<div class="t" style="left:0;width:200px;text-align:center;top:63.5px;font-size:15.2px;line-height:20px;color:#757575">ADATOK</div>
<div class="t" style="left:200px;width:200px;text-align:center;top:63.5px;font-size:15px;line-height:20px;color:#212121">SZEMÉLYRE SZABÁS</div>
<div style="left:200px;top:97px;width:200px;height:3px;background:#4285f4"></div>
<div class="sec t" style="top:115px">Grafikonstílus</div>
<svg style="left:361.5px;top:121px" width="15" height="10" viewBox="0 0 15 10"><path d="M1 1.3l6.500 6.500 6.500-6.500" fill="none" stroke="#666" stroke-width="2.500"/></svg>
<div class="sec t" style="top:169px">Kördiagram</div>
<svg style="left:361.5px;top:175px" width="15" height="10" viewBox="0 0 15 10"><path d="M1 1.3l6.500 6.500 6.500-6.500" fill="none" stroke="#666" stroke-width="2.500"/></svg>
<div class="sec t" style="top:223px">Grafikon és</div>
<svg style="left:361.5px;top:229px" width="15" height="10" viewBox="0 0 15 10"><path d="M1 1.3l6.500 6.500 6.500-6.500" fill="none" stroke="#666" stroke-width="2.500"/></svg>
<div class="sec t" style="top:277px">Sorozat</div>
<svg style="left:361.5px;top:283px" width="15" height="10" viewBox="0 0 15 10"><path d="M1 1.3l6.500 6.500 6.500-6.500" fill="none" stroke="#666" stroke-width="2.500"/></svg>
<div class="sec t" style="top:469px">Jelmagyarázat</div>
<svg style="left:361.5px;top:475px" width="15" height="10" viewBox="0 0 15 10"><path d="M1 1.3l6.500 6.500 6.500-6.500" fill="none" stroke="#666" stroke-width="2.500"/></svg>
<div class="sl" style="top:153px"></div>
<div class="sl" style="top:207px"></div>
<div class="sl" style="top:261px"></div>
<div class="sl" style="top:453px"></div>
<div class="sl" style="top:507px"></div>
<div style="left:0;top:350px;width:400px;height:103px;background:#fafafa"></div>
<div class="t" style="left:20px;top:320px;font-size:16px;line-height:20px;color:#8c8c8c;letter-spacing:0.05px">Alkalmazás erre:</div>
<div class="t" style="left:155px;top:320px;font-size:16px;line-height:20px;color:#212121;letter-spacing:0.3px">január</div>
<div class="dd" style="left:214.5px;top:327.5px;border-left-width:5px;border-right-width:5px;border-top-width:5.5px;border-top-color:#8a8a8a"></div>
<div class="t" style="left:20px;top:371px;font-size:13px;line-height:16px;color:#555">Szín</div>
<div style="left:20px;top:388px;width:50px;height:32px;background:#f0f0f0"></div>
<svg style="left:27px;top:391.500px" width="22" height="18" viewBox="0 0 20 16"><path d="M7.2 0.8L13.6 7.2 8.4 12.2Q7.6 12.8 6.8 12.2L2.6 8Q2 7.2 2.6 6.4L6 3 4.8 1.8 5.8 0.8 7 2z" fill="#666"/><path d="M4.6 7L7.6 4l3.4 3z" fill="#f0f0f0"/><path d="M15.400 8.200q1.700 2.200 1.700 3.200a1.700 1.700 0 0 1-3.400 0q0-1 1.700-3.200z" fill="#666"/></svg>
<div style="left:25px;top:412px;width:28px;height:4px;background:#3366cc"></div>
<div class="dd" style="left:55px;top:401px;border-left-width:5px;border-right-width:5px;border-top-width:5.5px;border-top-color:#666"></div>
<div style="left:0;top:785px;width:400px;height:40px;background:#eeeeee"></div>
<div class="t" style="right:13px;top:796px;font-size:13.7px;line-height:16px;color:#757575">A régi grafikonszerkesztő használata</div>
</div>
<div id="bottom">
<svg style="left:62px;top:13.5px" width="14" height="14" viewBox="0 0 14 14"><path d="M7 0.800v12.400M0.800 7h12.400" stroke="#555" stroke-width="2.600"/></svg>
<svg style="left:100px;top:13.5px" width="16" height="15" viewBox="0 0 16 15"><path d="M0 1.500h16M0 5.500h16M0 9.500h16M0 13.500h16" stroke="#555" stroke-width="2.500"/></svg>
<div class="tab" style="left:144px;width:100px"><span class="t" style="left:8.5px;top:0">Számlák</span><div class="dd" style="left:80.5px"></div></div>
<div class="tab" style="left:245px;width:170px"><span class="t" style="left:8.5px;top:0">Hivatkozástípusok</span><div class="dd" style="left:150.5px"></div></div>
<div class="tab" style="left:415px;width:192px"><span class="t" style="left:9px;top:0">Eladási mennyiségek</span><div class="dd" style="left:172.5px"></div></div>
<div class="tab" style="left:608px;width:115px"><span class="t" style="left:8.5px;top:0">2014-2017</span><div class="dd" style="left:96px"></div></div>
<div class="tab" style="left:724px;width:120px"><span class="t" style="left:9.5px;top:0">Terméklista</span><div class="dd" style="left:101px"></div></div>
<div class="tab" style="left:845px;top:-1px;width:117px;height:36px;background:#fff;border:1px solid #bbb;border-top:none;box-shadow:0 1px 2px rgba(0,0,0,0.25);color:#222;line-height:30px"><span class="t" style="left:9px;top:-0.3px">Diagramok</span><div class="dd" style="left:98px;top:12.5px;border-top-color:#b5b5b5"></div></div>
<div style="left:1785px;top:0;width:135px;height:48px;background:#fafafa;border-left:1px solid #b0b0b0"></div>
<svg style="left:1800px;top:12px" width="23" height="27" viewBox="0 0 24 28"><path d="M2 1h20a1.5 1.5 0 0 1 1.5 1.5v19a1.5 1.5 0 0 1-1.5 1.5H15.5L12 26.5 8.500 23H2A1.500 1.500 0 0 1 .5 21.500v-19A1.500 1.500 0 0 1 2 1z" fill="#0f9d58"/><path d="M12 4.500Q13 11 19.500 12 13 13 12 19.500 11 13 4.500 12 11 11 12 4.500z" fill="#fff"/></svg>
<div class="t" style="left:1841px;top:15px;font-size:15.2px;line-height:20px;color:#0f9d58">Feltárás</div>
<div style="left:0;top:47px;width:1920px;height:1px;background:#111"></div>
</div>
</body></html>
